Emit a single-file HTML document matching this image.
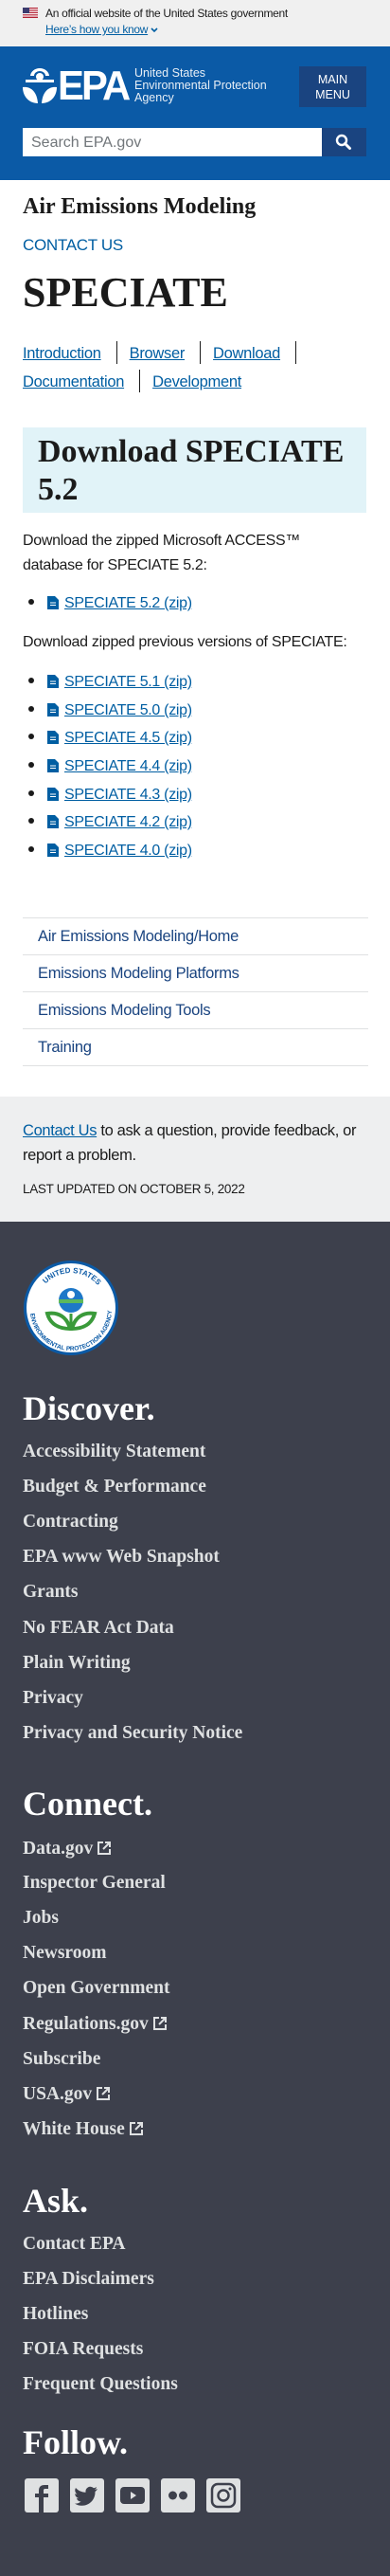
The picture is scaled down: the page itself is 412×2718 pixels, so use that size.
<!DOCTYPE html>
<html><head><meta charset="utf-8">
<style>
*{margin:0;padding:0;box-sizing:border-box}
html,body{width:412px;height:2718px;overflow:hidden;background:#fff}
body{position:relative;font-family:"Liberation Sans",sans-serif;color:#1b1b1b}
.a{position:absolute;white-space:nowrap}
.serif{font-family:"Liberation Serif",serif;font-weight:bold}
a{color:#005ea2}
.lnk{color:#005ea2;text-decoration:underline;font-size:16px;letter-spacing:-0.3px}
.fl{position:absolute;left:24px;font-family:"Liberation Serif",serif;font-weight:bold;font-size:19.5px;color:#dfe1e2;white-space:nowrap;line-height:24px}
.fh{position:absolute;left:24px;font-family:"Liberation Serif",serif;font-weight:bold;font-size:36px;color:#fff;line-height:40px}
.li{position:absolute;left:24px;font-size:16px;letter-spacing:-0.3px;line-height:22px;white-space:nowrap}
.li .dot{display:inline-block;width:6px;height:6px;border-radius:3px;background:#1b1b1b;margin:0 14px 3px 6px;vertical-align:middle}
.li svg{vertical-align:-2px;margin-right:6px}
.sn{position:absolute;left:24px;width:365px;height:1px;background:#dfe1e2}
.snt{position:absolute;left:40px;font-size:16.5px;color:#1a4480;letter-spacing:-0.3px;line-height:22px}
.soc{position:absolute;top:2615px;width:36px;height:36px;background:#dfe1e2;border-radius:3px}
.ext{margin-left:5px;vertical-align:-1px}
.nav{position:absolute;left:24px;font-size:16.5px;letter-spacing:-0.3px;line-height:24px;white-space:nowrap}
.nav .sep{display:inline-block;width:1px;height:24px;background:#1b1b1b;vertical-align:-6px;margin:0 13px 0 16px}
</style></head><body>
<!-- gov banner -->
<div class="a" style="left:0;top:0;width:412px;height:49px;background:#f0f0f0"></div>
<svg class="a" style="left:24px;top:8px" width="16" height="11" viewBox="0 0 16 11"><rect width="16" height="11" fill="#fff"/><g fill="#b22234"><rect y="0" width="16" height="1.2"/><rect y="2.4" width="16" height="1.2"/><rect y="4.8" width="16" height="1.2"/><rect y="7.2" width="16" height="1.2"/><rect y="9.6" width="16" height="1.4"/></g><rect width="7" height="6" fill="#3c3b6e"/></svg>
<div class="a" style="left:48px;top:7px;font-size:12px;letter-spacing:-0.3px;color:#1b1b1b">An official website of the United States government</div>
<div class="a" style="left:48px;top:24px;font-size:12px;letter-spacing:-0.3px;color:#005ea2"><span style="text-decoration:underline">Here’s how you know</span> <svg width="8" height="6" viewBox="0 0 8 6"><path d="M1 1l3 3 3-3" stroke="#005ea2" stroke-width="1.6" fill="none"/></svg></div>
<!-- header -->
<div class="a" style="left:0;top:49px;width:412px;height:141px;background:#0b5aa6"></div>
<svg class="a" style="left:24px;top:72px" width="36" height="38" viewBox="0 0 36 38"><g fill="#fff"><path d="M18 0a10 9 0 0 1 10 8H24a6 5 0 0 0-12 0H8A10 9 0 0 1 18 0z"/><circle cx="18" cy="9" r="4"/><rect x="3" y="12" width="30" height="3"/><path d="M0 20c8-1 15 4 16 17C7 37 0 30 0 20z"/><path d="M36 20c-8-1-15 4-16 17 9 0 16-7 16-17z"/></g></svg>
<div class="a" style="left:61px;top:66px;font-size:44px;font-weight:bold;color:#fff;letter-spacing:-3px;line-height:50px;transform:scaleX(.95);transform-origin:left">EPA</div>
<div class="a" style="left:142px;top:71px;font-size:12.5px;line-height:13px;color:#fff;opacity:.9">United States<br>Environmental Protection<br>Agency</div>
<div class="a" style="left:316px;top:70px;width:71px;height:43px;background:#1a4480;color:#fff;font-size:12.5px;text-align:center;line-height:16px;padding-top:6px">MAIN<br>MENU</div>
<div class="a" style="left:24px;top:135px;width:316px;height:30px;background:#fff"></div>
<div class="a" style="left:33px;top:142px;font-size:16px;color:#71767a">Search EPA.gov</div>
<div class="a" style="left:340px;top:135px;width:47px;height:30px;background:#1a4480"></div>
<svg class="a" style="left:354px;top:141px" width="18" height="18" viewBox="0 0 18 18"><circle cx="7" cy="7" r="5" stroke="#fff" stroke-width="2.4" fill="none"/><path d="M10.5 10.5l5 5" stroke="#fff" stroke-width="3" stroke-linecap="round"/></svg>
<!-- title area -->
<div class="a serif" style="left:24px;top:203px;font-size:24px;line-height:30px">Air Emissions Modeling</div>
<div class="a" style="left:24px;top:249px;font-size:17px;color:#005ea2;letter-spacing:-0.3px">CONTACT US</div>
<div class="a serif" style="left:24px;top:284px;font-size:44px;line-height:50px">SPECIATE</div>
<div class="nav" style="top:360px"><span class="lnk" style="font-size:16.5px">Introduction</span><span class="sep"></span><span class="lnk" style="font-size:16.5px">Browser</span><span class="sep"></span><span class="lnk" style="font-size:16.5px">Download</span><span class="sep"></span></div>
<div class="nav" style="top:390px"><span class="lnk" style="font-size:16.5px">Documentation</span><span class="sep"></span><span class="lnk" style="font-size:16.5px">Development</span></div>
<!-- download box -->
<div class="a" style="left:24px;top:451px;width:363px;height:90px;background:#e1f3f8"></div>
<div class="a serif" style="left:40px;top:457px;font-size:34px;line-height:40px;white-space:normal;width:340px">Download SPECIATE 5.2</div>
<div class="a" style="left:24px;top:558px;font-size:16px;letter-spacing:-0.3px;line-height:26px">Download the zipped Microsoft ACCESS™<br>database for SPECIATE 5.2:</div>
<div class="a" style="left:24px;top:669px;font-size:16px;letter-spacing:-0.3px">Download zipped previous versions of SPECIATE:</div>
<!-- list -->
<div class="li" style="top:626px"><span class="dot"></span><svg width="12" height="14" viewBox="0 0 12 14"><path d="M0 0h8l4 4v10H0z" fill="#005ea2"/><path d="M3 7h6M3 9.5h6" stroke="#fff"/></svg><span class="lnk">SPECIATE 5.2 (zip)</span></div>
<div class="li" style="top:709px"><span class="dot"></span><svg width="12" height="14" viewBox="0 0 12 14"><path d="M0 0h8l4 4v10H0z" fill="#005ea2"/><path d="M3 7h6M3 9.5h6" stroke="#fff"/></svg><span class="lnk">SPECIATE 5.1 (zip)</span></div>
<div class="li" style="top:739px"><span class="dot"></span><svg width="12" height="14" viewBox="0 0 12 14"><path d="M0 0h8l4 4v10H0z" fill="#005ea2"/><path d="M3 7h6M3 9.5h6" stroke="#fff"/></svg><span class="lnk">SPECIATE 5.0 (zip)</span></div>
<div class="li" style="top:768px"><span class="dot"></span><svg width="12" height="14" viewBox="0 0 12 14"><path d="M0 0h8l4 4v10H0z" fill="#005ea2"/><path d="M3 7h6M3 9.5h6" stroke="#fff"/></svg><span class="lnk">SPECIATE 4.5 (zip)</span></div>
<div class="li" style="top:798px"><span class="dot"></span><svg width="12" height="14" viewBox="0 0 12 14"><path d="M0 0h8l4 4v10H0z" fill="#005ea2"/><path d="M3 7h6M3 9.5h6" stroke="#fff"/></svg><span class="lnk">SPECIATE 4.4 (zip)</span></div>
<div class="li" style="top:828px"><span class="dot"></span><svg width="12" height="14" viewBox="0 0 12 14"><path d="M0 0h8l4 4v10H0z" fill="#005ea2"/><path d="M3 7h6M3 9.5h6" stroke="#fff"/></svg><span class="lnk">SPECIATE 4.3 (zip)</span></div>
<div class="li" style="top:857px"><span class="dot"></span><svg width="12" height="14" viewBox="0 0 12 14"><path d="M0 0h8l4 4v10H0z" fill="#005ea2"/><path d="M3 7h6M3 9.5h6" stroke="#fff"/></svg><span class="lnk">SPECIATE 4.2 (zip)</span></div>
<div class="li" style="top:887px"><span class="dot"></span><svg width="12" height="14" viewBox="0 0 12 14"><path d="M0 0h8l4 4v10H0z" fill="#005ea2"/><path d="M3 7h6M3 9.5h6" stroke="#fff"/></svg><span class="lnk">SPECIATE 4.0 (zip)</span></div>
<!-- side nav -->
<div class="sn" style="top:968px"></div>
<div class="snt" style="top:977px">Air Emissions Modeling/Home</div>
<div class="sn" style="top:1007px"></div>
<div class="snt" style="top:1016px">Emissions Modeling Platforms</div>
<div class="sn" style="top:1046px"></div>
<div class="snt" style="top:1055px">Emissions Modeling Tools</div>
<div class="sn" style="top:1085px"></div>
<div class="snt" style="top:1094px">Training</div>
<div class="sn" style="top:1124px"></div>
<!-- contact section -->
<div class="a" style="left:0;top:1157px;width:412px;height:132px;background:#eeeff0"></div>
<div class="a" style="left:24px;top:1180px;font-size:16.5px;letter-spacing:-0.35px;line-height:26px;color:#1b1b1b"><span style="color:#005ea2;text-decoration:underline">Contact Us</span> to ask a question, provide feedback, or<br>report a problem.</div>
<div class="a" style="left:24px;top:1247px;font-size:13.5px;letter-spacing:-0.3px;color:#1b1b1b">LAST UPDATED ON OCTOBER 5, 2022</div>
<!-- footer -->
<div class="a" style="left:0;top:1289px;width:412px;height:1429px;background:#3d404c"></div>
<svg class="a" style="left:24px;top:1328px" width="102" height="104" viewBox="0 0 102 104">
<circle cx="51" cy="52" r="50" fill="#0b5aa6"/><circle cx="51" cy="52" r="47" fill="#fff"/>
<path id="arc" d="M14 52a37 37 0 0 1 74 0" fill="none"/>
<text font-family="Liberation Sans" font-size="8" font-weight="bold" fill="#0b5aa6"><textPath href="#arc" startOffset="24%">UNITED STATES</textPath></text>
<path id="arc2" d="M8 54a43 43 0 0 0 86 0" fill="none"/>
<text font-family="Liberation Sans" font-size="6.5" font-weight="bold" fill="#0b5aa6"><textPath href="#arc2" startOffset="3%">ENVIRONMENTAL PROTECTION AGENCY</textPath></text>
<circle cx="51" cy="44" r="13" fill="#1e78c8"/><rect x="38" y="43" width="26" height="4" fill="#5cb85c"/><circle cx="51" cy="38" r="4" fill="#fff"/>
<path d="M26 58c12-2 21 4 24 16C38 74 29 69 26 58z" fill="none" stroke="#3a9a3a" stroke-width="4"/><path d="M76 58c-12-2-21 4-24 16 12 0 21-5 24-16z" fill="none" stroke="#3a9a3a" stroke-width="4"/><path d="M51 58v18" stroke="#3a9a3a" stroke-width="3"/>
</svg>
<div class="fh" style="top:1466px">Discover.</div>
<div class="fl" style="top:1520px">Accessibility Statement</div>
<div class="fl" style="top:1557px">Budget &amp; Performance</div>
<div class="fl" style="top:1594px">Contracting</div>
<div class="fl" style="top:1631px">EPA www Web Snapshot</div>
<div class="fl" style="top:1668px">Grants</div>
<div class="fl" style="top:1706px">No FEAR Act Data</div>
<div class="fl" style="top:1743px">Plain Writing</div>
<div class="fl" style="top:1780px">Privacy</div>
<div class="fl" style="top:1817px">Privacy and Security Notice</div>
<div class="fh" style="top:1883px">Connect.</div>
<div class="fl" style="top:1939px">Data.gov<svg class="ext" width="14" height="14" viewBox="0 0 14 14"><path d="M6 1H1v12h12V8" stroke="#dfe1e2" stroke-width="2" fill="none"/><path d="M8 1h5v5M13 1L6 8" stroke="#dfe1e2" stroke-width="2" fill="none"/></svg></div>
<div class="fl" style="top:1975px">Inspector General</div>
<div class="fl" style="top:2012px">Jobs</div>
<div class="fl" style="top:2049px">Newsroom</div>
<div class="fl" style="top:2086px">Open Government</div>
<div class="fl" style="top:2124px">Regulations.gov<svg class="ext" width="14" height="14" viewBox="0 0 14 14"><path d="M6 1H1v12h12V8" stroke="#dfe1e2" stroke-width="2" fill="none"/><path d="M8 1h5v5M13 1L6 8" stroke="#dfe1e2" stroke-width="2" fill="none"/></svg></div>
<div class="fl" style="top:2161px">Subscribe</div>
<div class="fl" style="top:2198px">USA.gov<svg class="ext" width="14" height="14" viewBox="0 0 14 14"><path d="M6 1H1v12h12V8" stroke="#dfe1e2" stroke-width="2" fill="none"/><path d="M8 1h5v5M13 1L6 8" stroke="#dfe1e2" stroke-width="2" fill="none"/></svg></div>
<div class="fl" style="top:2235px">White House<svg class="ext" width="14" height="14" viewBox="0 0 14 14"><path d="M6 1H1v12h12V8" stroke="#dfe1e2" stroke-width="2" fill="none"/><path d="M8 1h5v5M13 1L6 8" stroke="#dfe1e2" stroke-width="2" fill="none"/></svg></div>
<div class="fh" style="top:2302px">Ask.</div>
<div class="fl" style="top:2356px">Contact EPA</div>
<div class="fl" style="top:2393px">EPA Disclaimers</div>
<div class="fl" style="top:2430px">Hotlines</div>
<div class="fl" style="top:2467px">FOIA Requests</div>
<div class="fl" style="top:2504px">Frequent Questions</div>
<div class="fh" style="top:2557px">Follow.</div>
<div class="soc" style="left:26px"><svg width="36" height="36" viewBox="0 0 36 36"><path d="M20 36V20h5v-4h-5v-3c0-2 1-2 2-2h3V7h-4c-4 0-6 2-6 6v3h-4v4h4v16z" fill="#3d404c"/></svg></div>
<div class="soc" style="left:74px"><svg width="36" height="36" viewBox="0 0 36 36"><path d="M29 11c-1 .5-2 .7-3 .8 1-.6 2-1.6 2-2.7-1 .6-2 1-3 1.2a5 5 0 0 0-8.5 4.5C12 14.6 8.5 12.8 6 10c-1.5 2.5-.5 5.3 1.5 6.7-.8 0-1.6-.3-2.3-.6 0 2.4 1.8 4.4 4 4.9-.7.2-1.5.2-2.2.1.6 2 2.5 3.4 4.6 3.4A10 10 0 0 1 5 26.6 14 14 0 0 0 26.5 14.5V14c1-.7 1.8-1.6 2.5-3z" fill="#3d404c"/></svg></div>
<div class="soc" style="left:122px"><svg width="36" height="36" viewBox="0 0 36 36"><rect x="5" y="9" width="26" height="18" rx="4" fill="#3d404c"/><path d="M16 14v8l6-4z" fill="#dfe1e2"/></svg></div>
<div class="soc" style="left:170px"><svg width="36" height="36" viewBox="0 0 36 36"><circle cx="12.5" cy="18" r="4.5" fill="#3d404c"/><circle cx="23.5" cy="18" r="4.5" fill="#3d404c"/></svg></div>
<div class="soc" style="left:218px"><svg width="36" height="36" viewBox="0 0 36 36"><rect x="6" y="6" width="24" height="24" rx="6" fill="none" stroke="#3d404c" stroke-width="2.5"/><circle cx="18" cy="18" r="5.5" fill="none" stroke="#3d404c" stroke-width="2.5"/><circle cx="25" cy="11" r="1.5" fill="#3d404c"/></svg></div>
</body></html>
